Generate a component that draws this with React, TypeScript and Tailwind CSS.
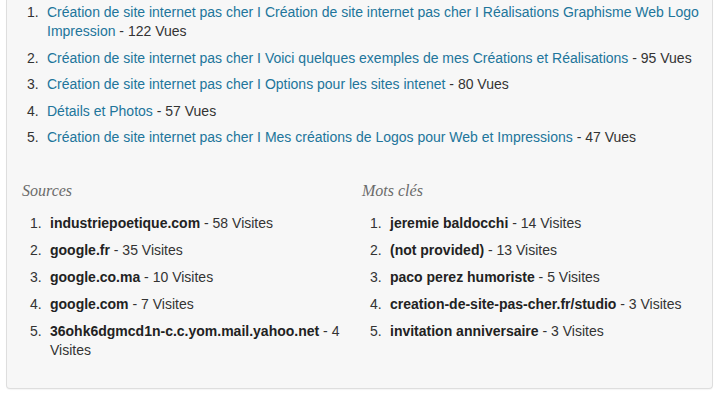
const pages = [
  {
    title:
      'Création de site internet pas cher I Création de site internet pas cher I Réalisations Graphisme Web Logo Impression',
    views: 122,
  },
  { title: 'Création de site internet pas cher I Voici quelques exemples de mes Créations et Réalisations', views: 95 },
  { title: 'Création de site internet pas cher I Options pour les sites intenet', views: 80 },
  { title: 'Détails et Photos', views: 57 },
  { title: 'Création de site internet pas cher I Mes créations de Logos pour Web et Impressions', views: 47 },
];

const sources = [
  { name: 'industriepoetique.com', visits: 58 },
  { name: 'google.fr', visits: 35 },
  { name: 'google.co.ma', visits: 10 },
  { name: 'google.com', visits: 7 },
  { name: '36ohk6dgmcd1n-c.c.yom.mail.yahoo.net', visits: 4 },
];

const keywords = [
  { name: 'jeremie baldocchi', visits: 14 },
  { name: '(not provided)', visits: 13 },
  { name: 'paco perez humoriste', visits: 5 },
  { name: 'creation-de-site-pas-cher.fr/studio', visits: 3 },
  { name: 'invitation anniversaire', visits: 3 },
];

function StatList({ title, items }: { title: string; items: { name: string; visits: number }[] }) {
  return (
    <div className="pr-[14px]">
      <h4 className="text-[16px] italic text-[#6b6b6b] leading-[20px]" style={{ fontFamily: '"Liberation Serif", serif' }}>
        {title}
      </h4>
      <ol className="mt-[13px] pl-[8px] flex flex-col gap-[8px]">
        {items.map((it, i) => (
          <li key={it.name} className="flex">
            <span className="w-[20px] shrink-0">{i + 1}.</span>
            <span>
              <strong className="font-bold text-[#222]">{it.name}</strong> - {it.visits} Visites
            </span>
          </li>
        ))}
      </ol>
    </div>
  );
}

export default function App() {
  return (
    <div className="bg-white w-[720px] h-[406px]" style={{ fontFamily: '"Liberation Sans", Arial, sans-serif' }}>
      <div className="ml-[6px] w-[707px] bg-[#f7f7f7] border border-t-0 border-[#dedede] rounded-b-[4px] shadow-[0_1px_1px_rgba(0,0,0,0.04)] pt-[3px] pb-[28px] text-[14px] leading-[19px] text-[#333]">
        <ol className="pl-[20px] pr-[8px] flex flex-col gap-[7.5px]">
          {pages.map((p, i) => (
            <li key={i} className="flex">
              <span className="w-[20px] shrink-0">{i + 1}.</span>
              <span>
                <a className="text-[#21759b]">{p.title}</a> - {p.views} Vues
              </span>
            </li>
          ))}
        </ol>
        <div className="grid grid-cols-[340px_340px] pl-[15px] mt-[34px]">
          <StatList title="Sources" items={sources} />
          <StatList title="Mots clés" items={keywords} />
        </div>
      </div>
    </div>
  );
}
